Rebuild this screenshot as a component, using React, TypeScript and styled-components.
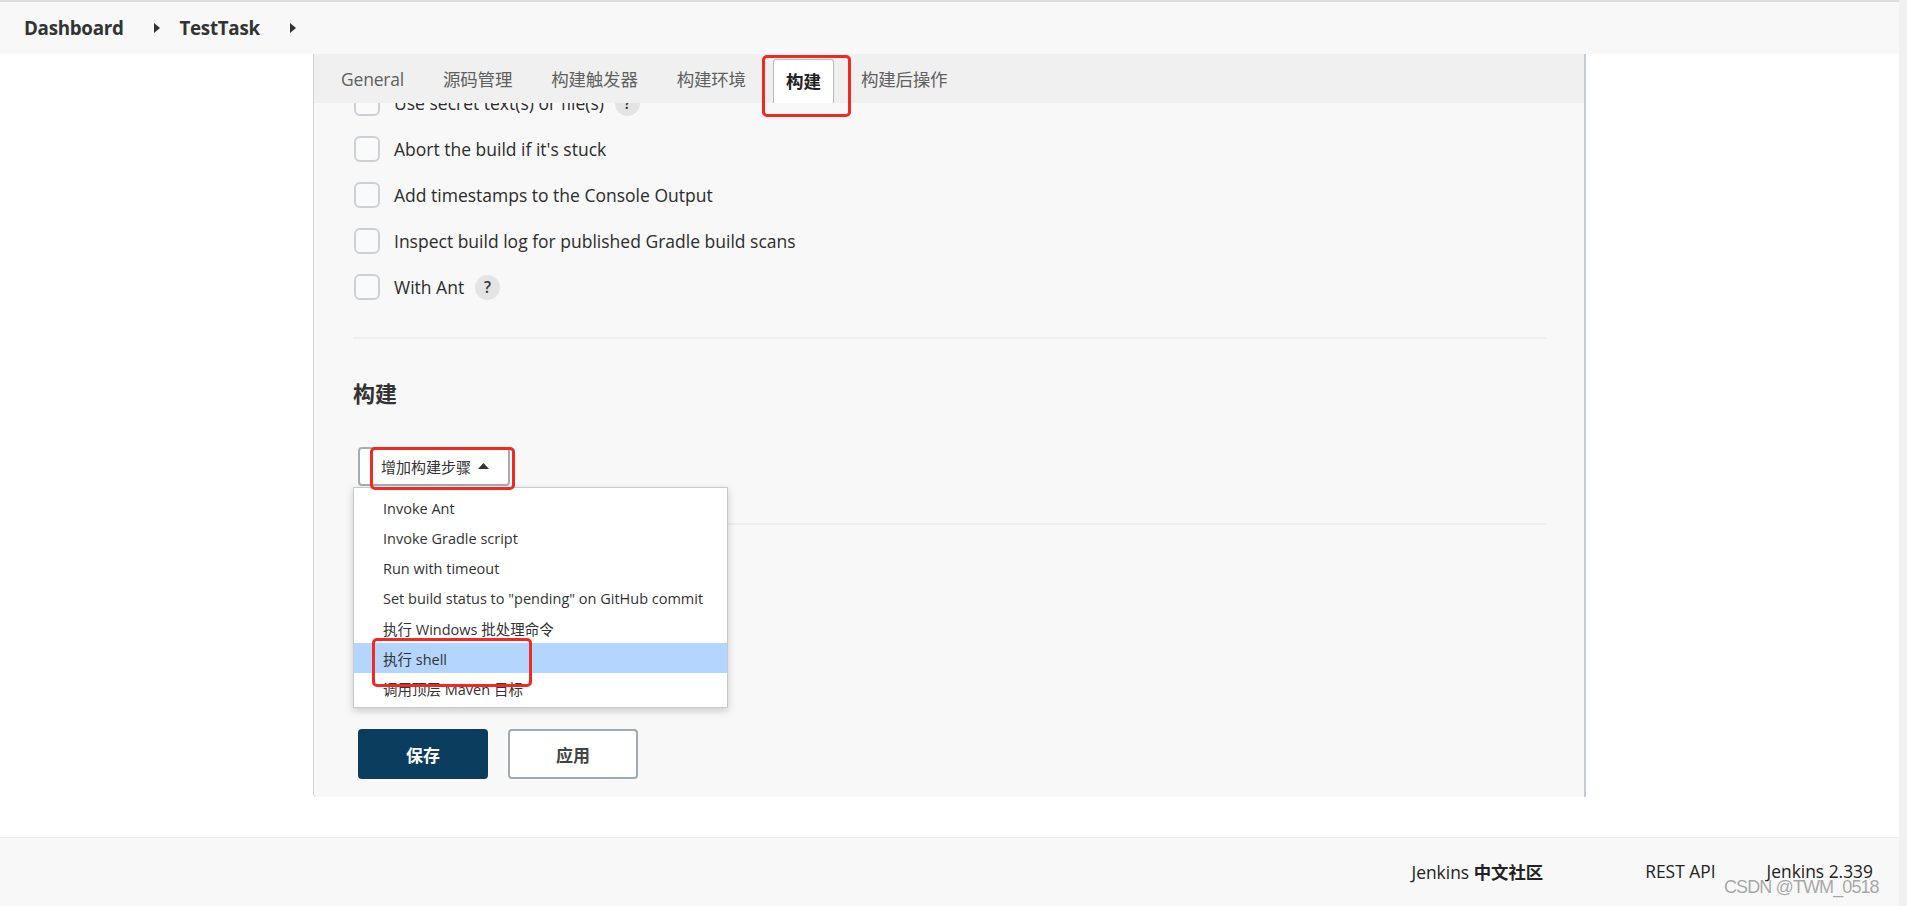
import React from "react";
import styled, { createGlobalStyle } from "styled-components";

const FONT = '"Open Sans", "Noto Sans CJK SC", sans-serif';

const Global = createGlobalStyle`
  html, body { margin: 0; padding: 0; background: #fff; }
  body { font-family: ${FONT}; color: #333; overflow: hidden; }
  * { box-sizing: border-box; }
`;

const Screen = styled.div`
  position: relative;
  display: flex;
  width: 1907px;
  height: 906px;
  overflow: hidden;
`;

const Main = styled.div`
  flex: 1;
  display: flex;
  flex-direction: column;
  min-width: 0;
`;

const ScrollTrack = styled.div`
  width: 8px;
  background: #f1f1f1;
`;

const Header = styled.header`
  height: 54px;
  border-top: 2px solid #dedede;
  background: #f8f8f8;
  display: flex;
  align-items: center;
  padding-left: 24px;
`;

const Crumb = styled.span`
  font-weight: 700;
  font-size: 18.8px;
  color: #333;
  letter-spacing: -0.3px;
`;

const CrumbArrow = styled.span`
  display: inline-flex;
  margin: 0 20px 0 30px;
`;

const Body = styled.div`
  display: flex;
  height: 743px;
`;

const Gutter = styled.div`
  width: 313px;
  flex: none;
`;

const Panel = styled.section`
  position: relative;
  width: 1273px;
  flex: none;
  background: #f8f8f8;
  border-left: 1px solid #cfd4d8;
  border-right: 2px solid #c3cbd1;
  border-bottom-left-radius: 4px;
  display: flex;
  flex-direction: column;
`;

const TabBar = styled.nav`
  height: 49px;
  flex: none;
  background: #f0f0f0;
  display: flex;
  align-items: flex-end;
  padding-left: 15px;
  position: relative;
  z-index: 2;
`;

const Tab = styled.div<{ $active?: boolean }>`
  position: relative;
  height: ${(p) => (p.$active ? "44px" : "49px")};
  display: flex;
  align-items: center;
  padding: ${(p) => (p.$active ? "0 12px 2px" : "0 12px")};
  margin-right: 15px;
  font-size: 17.5px;
  letter-spacing: ${(p) => (p.$active ? "0" : "-0.2px")};
  color: ${(p) => (p.$active ? "#222" : "#5f5f5f")};
  font-weight: ${(p) => (p.$active ? 700 : 400)};
  background: ${(p) => (p.$active ? "#fff" : "transparent")};
  border: ${(p) => (p.$active ? "1px solid #b4bcc2" : "none")};
  border-bottom: none;
  border-radius: 3px 3px 0 0;
`;

const Annotation = styled.div<{ $l: number; $t: number; $w: number; $h: number }>`
  position: absolute;
  left: ${(p) => p.$l}px;
  top: ${(p) => p.$t}px;
  width: ${(p) => p.$w}px;
  height: ${(p) => p.$h}px;
  border: 3px solid #ee2a22;
  border-radius: 5px;
  pointer-events: none;
  z-index: 10;
`;

const Content = styled.div`
  flex: 1;
  overflow: hidden;
  position: relative;
  display: flex;
  flex-direction: column;
`;

const Inner = styled.div`
  margin-top: -23px;
  padding: 0 38px 0 39px;
  display: flex;
  flex-direction: column;
  flex: 1;
`;

const Row = styled.div`
  height: 46px;
  display: flex;
  align-items: center;
  font-size: 17.5px;
  color: #2c2c2c;
`;

const Box = styled.span`
  width: 26px;
  height: 26px;
  border: 2px solid #ccd1d5;
  border-radius: 6px;
  background: #fafafa;
  margin: 0 14px 0 1px;
  flex: none;
`;

const Help = styled.span`
  width: 25px;
  height: 25px;
  margin-left: 11px;
  border-radius: 50%;
  background: #e4e4e4;
  color: #333;
  font-size: 15.5px;
  font-weight: 600;
  display: inline-flex;
  align-items: center;
  justify-content: center;
`;

const Separator = styled.hr<{ $top: number }>`
  border: none;
  border-top: 2px solid #eeeeee;
  margin: ${(p) => p.$top}px 0 0;
  height: 0;
`;

const Heading = styled.h2`
  margin: 39px 0 0;
  font-size: 22px;
  line-height: 30px;
  font-weight: 700;
  color: #333;
`;

const StepWrap = styled.div`
  position: relative;
  margin-top: 39px;
  align-self: flex-start;
  margin-left: 5px;
`;

const StepButton = styled.button`
  height: 39px;
  width: 152px;
  border: 2px solid #a4adb5;
  border-radius: 4px;
  background: #fff;
  font-family: ${FONT};
  font-size: 15px;
  color: #333;
  display: flex;
  align-items: center;
  padding: 0 0 1px 21px;
  gap: 7px;
`;

const Menu = styled.ul`
  position: absolute;
  left: -5px;
  top: 40px;
  width: 375px;
  margin: 0;
  padding: 5px 0 4px;
  list-style: none;
  background: #fff;
  border: 1px solid #c4cad0;
  box-shadow: 0 3px 8px rgba(0, 0, 0, 0.18);
  z-index: 5;
`;

const MenuItem = styled.li<{ $hi?: boolean }>`
  position: relative;
  height: 30px;
  display: flex;
  align-items: center;
  padding-left: 29px;
  font-size: 14.5px;
  color: #333;
  background: ${(p) => (p.$hi ? "#b4d5fd" : "transparent")};
`;

const Actions = styled.div`
  display: flex;
  gap: 20px;
  margin-top: auto;
  margin-bottom: 18px;
  margin-left: 5px;
`;

const ActionButton = styled.button<{ $primary?: boolean }>`
  width: 130px;
  height: 50px;
  border-radius: 4px;
  font-family: ${FONT};
  font-size: 17px;
  font-weight: 700;
  background: ${(p) => (p.$primary ? "#0b3d5f" : "#fff")};
  color: ${(p) => (p.$primary ? "#fff" : "#444")};
  border: ${(p) => (p.$primary ? "none" : "2px solid #9eaab4")};
`;

const Gap = styled.div`
  height: 40px;
`;

const Footer = styled.footer`
  flex: 1;
  background: #f8f8f8;
  border-top: 1px solid #ececec;
  display: flex;
  align-items: center;
  justify-content: flex-end;
  padding: 0 26px 2px 0;
  font-size: 17.4px;
  color: #222;
`;

const FooterLink = styled.span<{ $gap: number }>`
  margin-left: ${(p) => p.$gap}px;
  white-space: nowrap;
  & b { font-weight: 700; }
`;

const Watermark = styled.div`
  position: absolute;
  left: 1724px;
  top: 877px;
  white-space: nowrap;
  font-family: "Liberation Sans", sans-serif;
  font-size: 18px;
  letter-spacing: -0.9px;
  color: rgba(150, 150, 150, 0.85);
  text-shadow: 0 0 1px #fff;
  pointer-events: none;
`;

const RightTriangle = () => (
  <svg width="6" height="10" viewBox="0 0 6 10">
    <path d="M0 0 L6 5 L0 10 Z" fill="#333" />
  </svg>
);

const UpTriangle = () => (
  <svg width="11" height="6" viewBox="0 0 11 6">
    <path d="M0 6 L5.5 0 L11 6 Z" fill="#333" />
  </svg>
);

const tabs = ["General", "源码管理", "构建触发器", "构建环境", "构建", "构建后操作"];
const options = [
  "Use secret text(s) or file(s)",
  "Abort the build if it's stuck",
  "Add timestamps to the Console Output",
  "Inspect build log for published Gradle build scans",
  "With Ant",
];
const help = [true, false, false, false, true];
const steps = [
  "Invoke Ant",
  "Invoke Gradle script",
  "Run with timeout",
  'Set build status to "pending" on GitHub commit',
  "执行 Windows 批处理命令",
  "执行 shell",
  "调用顶层 Maven 目标",
];

export default function App() {
  return (
    <Screen>
      <Global />
      <Main>
        <Header>
          <Crumb>Dashboard</Crumb>
          <CrumbArrow>
            <RightTriangle />
          </CrumbArrow>
          <Crumb>TestTask</Crumb>
          <CrumbArrow>
            <RightTriangle />
          </CrumbArrow>
        </Header>
        <Body>
          <Gutter />
          <Panel>
            <TabBar>
              {tabs.map((t, i) => (
                <Tab key={t} $active={i === 4}>
                  {t}
                  {i === 4 && <Annotation $l={-12} $t={-5} $w={89} $h={62} />}
                </Tab>
              ))}
            </TabBar>
            <Content>
              <Inner>
                {options.map((o, i) => (
                  <Row key={o}>
                    <Box />
                    {o}
                    {help[i] && <Help>?</Help>}
                  </Row>
                ))}
                <Separator $top={27} />
                <Heading>构建</Heading>
                <StepWrap>
                  <StepButton>
                    增加构建步骤
                    <UpTriangle />
                  </StepButton>
                  <Annotation $l={12} $t={0} $w={145} $h={43} />
                  <Menu>
                    {steps.map((s, i) => (
                      <MenuItem key={s} $hi={i === 5}>
                        {s}
                        {i === 5 && <Annotation $l={18} $t={-5} $w={160} $h={49} />}
                      </MenuItem>
                    ))}
                  </Menu>
                </StepWrap>
                <Separator $top={37} />
                <Actions>
                  <ActionButton $primary>保存</ActionButton>
                  <ActionButton>应用</ActionButton>
                </Actions>
              </Inner>
            </Content>
          </Panel>
        </Body>
        <Gap />
        <Footer>
          <FooterLink $gap={0}>
            Jenkins <b>中文社区</b>
          </FooterLink>
          <FooterLink $gap={102}>REST API</FooterLink>
          <FooterLink $gap={51}>Jenkins 2.339</FooterLink>
        </Footer>
      </Main>
      <ScrollTrack />
      <Watermark>CSDN @TWM_0518</Watermark>
    </Screen>
  );
}
